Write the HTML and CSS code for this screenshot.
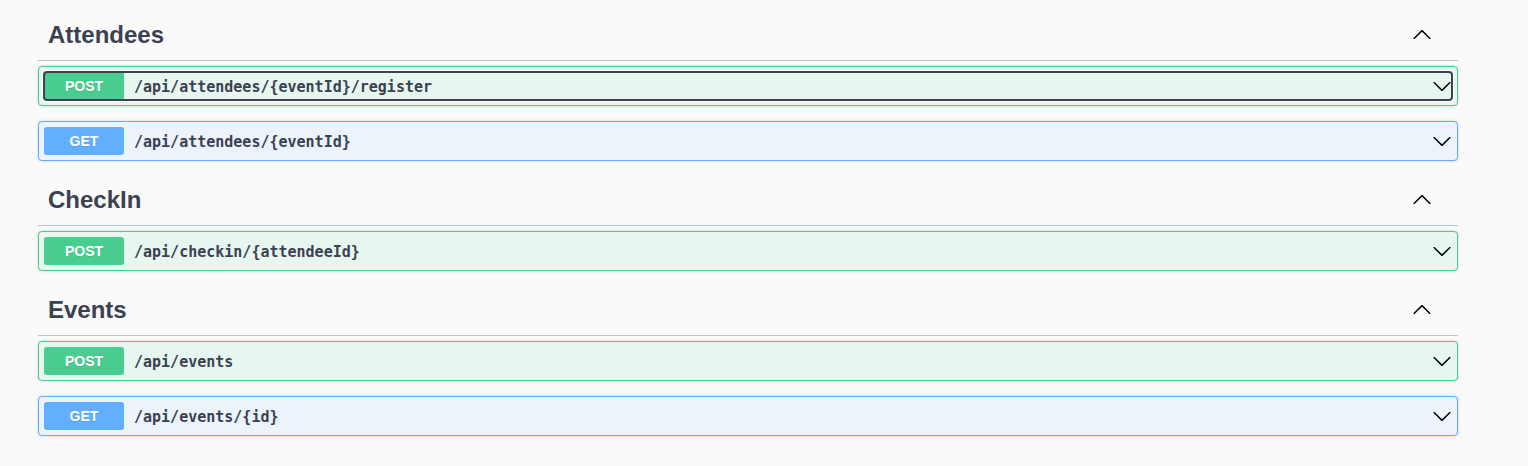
FILE: index.html
```html
<!DOCTYPE html>
<html lang="en">
<head>
<meta charset="utf-8">
<title>API endpoints</title>
<link rel="stylesheet" href="styles.css">
</head>
<body>
<svg class="sprite" aria-hidden="true">
  <symbol id="arrow-down" viewBox="0 0 20 20"><path d="M17.418 6.109c.272-.268.709-.268.979 0s.271.701 0 .969l-7.908 7.83c-.27.268-.707.268-.979 0l-7.908-7.83c-.27-.268-.27-.701 0-.969s.709-.268.979 0L10 13.25z"/></symbol>
  <symbol id="arrow-up" viewBox="0 0 20 20"><path d="M17.418 14.908c.272.27.709.27.979 0s.271-.701 0-.969l-7.908-7.83c-.27-.268-.707-.268-.979 0l-7.908 7.83c-.27.268-.27.701 0 .969s.709.27.979 0L10 7.767z"/></symbol>
</svg>
<main class="api">
  <section class="tag">
    <div class="tag-header">
      <h2 class="tag-name">Attendees</h2>
      <button class="tag-toggle" type="button" aria-label="Collapse Attendees" aria-expanded="true"><svg class="arrow"><use href="#arrow-up"/></svg></button>
    </div>
    <div class="operations">
      <div class="op op-post"><button class="op-summary is-focused" type="button" aria-expanded="false"><span class="method">POST</span><span class="path">/api/attendees/{eventId}/register</span><svg class="arrow"><use href="#arrow-down"/></svg></button></div>
      <div class="op op-get"><button class="op-summary" type="button" aria-expanded="false"><span class="method">GET</span><span class="path">/api/attendees/{eventId}</span><svg class="arrow"><use href="#arrow-down"/></svg></button></div>
    </div>
  </section>
  <section class="tag">
    <div class="tag-header">
      <h2 class="tag-name">CheckIn</h2>
      <button class="tag-toggle" type="button" aria-label="Collapse CheckIn" aria-expanded="true"><svg class="arrow"><use href="#arrow-up"/></svg></button>
    </div>
    <div class="operations">
      <div class="op op-post"><button class="op-summary" type="button" aria-expanded="false"><span class="method">POST</span><span class="path">/api/checkin/{attendeeId}</span><svg class="arrow"><use href="#arrow-down"/></svg></button></div>
    </div>
  </section>
  <section class="tag">
    <div class="tag-header">
      <h2 class="tag-name">Events</h2>
      <button class="tag-toggle" type="button" aria-label="Collapse Events" aria-expanded="true"><svg class="arrow"><use href="#arrow-up"/></svg></button>
    </div>
    <div class="operations">
      <div class="op op-post"><button class="op-summary" type="button" aria-expanded="false"><span class="method">POST</span><span class="path">/api/events</span><svg class="arrow"><use href="#arrow-down"/></svg></button></div>
      <div class="op op-get"><button class="op-summary" type="button" aria-expanded="false"><span class="method">GET</span><span class="path">/api/events/{id}</span><svg class="arrow"><use href="#arrow-down"/></svg></button></div>
    </div>
  </section>
</main>
</body>
</html>
```
FILE: styles.css
```css
* {
  box-sizing: border-box;
}

body {
  margin: 0;
  background: #fafafa;
  color: #3b4151;
  font-family: "Liberation Sans", Arial, sans-serif;
}

button {
  margin: 0;
  border: 0;
  padding: 0;
  background: none;
  color: inherit;
  font: inherit;
  cursor: pointer;
}

.sprite {
  display: none;
}

.api {
  padding: 11px 70px 14px 38px;
}

.tag-header {
  display: flex;
  align-items: center;
  padding: 10px 26px 11px 10px;
  border-bottom: 1px solid rgba(59, 65, 81, 0.3);
}

.tag-name {
  flex: 1;
  margin: 0;
  font-size: 24px;
  line-height: 28px;
}

.tag-toggle {
  padding-bottom: 3px;
}

.arrow {
  display: block;
  flex: none;
  width: 20px;
  height: 20px;
  fill: #000;
}

.operations {
  display: grid;
  gap: 15px;
  padding: 5px 0 15px;
}

.op {
  padding: 5px;
  border: 1px solid;
  border-radius: 4px;
  box-shadow: 0 0 3px rgba(0, 0, 0, 0.19);
}

.op-post {
  border-color: #49cc90;
  background: #e8f6f0;
}

.op-get {
  border-color: #61affe;
  background: #ebf3fb;
}

.op-summary {
  display: flex;
  align-items: center;
  gap: 10px;
  width: 100%;
}

.is-focused {
  border-radius: 3px;
  outline: 2px solid #3b4151;
  outline-offset: -1px;
  box-shadow: 0 0 0 2px #fff;
}

.method {
  width: 80px;
  border-radius: 3px;
  color: #fff;
  font-size: 14px;
  font-weight: 700;
  line-height: 28px;
  text-align: center;
  text-shadow: 0 1px 0 rgba(0, 0, 0, 0.1);
}

.op-post .method {
  background: #49cc90;
}

.op-get .method {
  background: #61affe;
}

.path {
  flex: 1;
  padding-top: 2px;
  font-family: "DejaVu Sans Mono", monospace;
  font-size: 15px;
  font-weight: 700;
  line-height: 20px;
  text-align: left;
}
```
